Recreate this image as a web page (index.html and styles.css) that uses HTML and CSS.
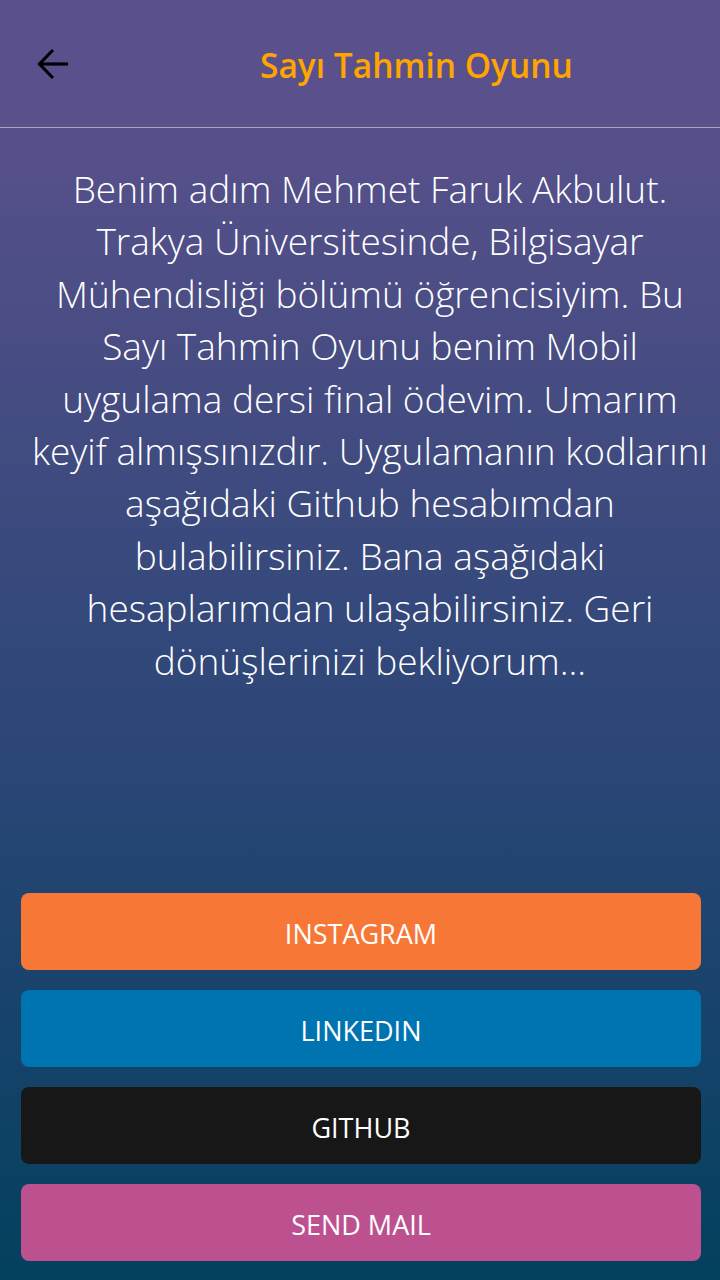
FILE: index.html
```html
<!DOCTYPE html>
<html lang="tr">
<head>
<meta charset="utf-8">
<title>Sayı Tahmin Oyunu</title>
<link rel="stylesheet" href="styles.css">
</head>
<body>
<div class="screen">
  <header class="appbar">
    <button class="back" aria-label="Geri">
      <svg width="32" height="32" viewBox="0 0 32 32" fill="none" stroke="#000" stroke-width="3.2" stroke-linecap="butt" stroke-linejoin="miter">
        <path d="M31 16H3"/>
        <path d="M16 2L2.5 16L16 30"/>
      </svg>
    </button>
    <h1 class="title">Sayı Tahmin Oyunu</h1>
  </header>
  <main class="content">
    <p class="about">Benim adım Mehmet Faruk Akbulut.<br>Trakya Üniversitesinde, Bilgisayar<br>Mühendisliği bölümü öğrencisiyim. Bu<br>Sayı Tahmin Oyunu benim Mobil<br>uygulama dersi final ödevim. Umarım<br>keyif almışsınızdır. Uygulamanın kodlarını<br>aşağıdaki Github hesabımdan<br>bulabilirsiniz. Bana aşağıdaki<br>hesaplarımdan ulaşabilirsiniz. Geri<br>dönüşlerinizi bekliyorum...</p>
  </main>
  <nav class="links">
    <a class="btn btn-instagram" href="#">INSTAGRAM</a>
    <a class="btn btn-linkedin" href="#">LINKEDIN</a>
    <a class="btn btn-github" href="#">GITHUB</a>
    <a class="btn btn-mail" href="#">SEND MAIL</a>
  </nav>
</div>
</body>
</html>
```

FILE: styles.css
```css
* { box-sizing: border-box; }
html, body { margin: 0; padding: 0; }
body {
  width: 720px;
  height: 1280px;
  font-family: "Open Sans", "Noto Sans", sans-serif;
  overflow: hidden;
}
.screen {
  width: 720px;
  height: 1280px;
  display: flex;
  flex-direction: column;
  background: linear-gradient(180deg, #5a518c 0%, #56508a 12%, #2a4676 60%, #03405e 100%);
}
.appbar {
  height: 128px;
  flex: none;
  display: flex;
  align-items: center;
  border-bottom: 1px solid #a8a8b4;
  background: #5a518c;
}
.back {
  width: 32px;
  height: 32px;
  margin-left: 37px;
  padding: 0;
  border: 0;
  background: none;
  display: flex;
}
.title {
  margin: 4px 0 0 191px;
  font-size: 33.5px;
  font-weight: 600;
  color: #ffa500;
  line-height: 1;
}
.content {
  flex: 1;
  padding: 35px 0 0 20px;
}
.about {
  margin: 0;
  color: #fff;
  font-weight: 300;
  font-size: 37px;
  line-height: 52.4px;
  text-align: center;
}
.links {
  display: flex;
  flex-direction: column;
  gap: 20px;
  padding: 0 19px 19px 21px;
}
.btn {
  display: flex;
  align-items: center;
  justify-content: center;
  height: 77px;
  padding-top: 3px;
  border-radius: 8px;
  color: #fff;
  text-decoration: none;
  font-size: 27px;
}
.btn-instagram { background: #f77737; }
.btn-linkedin { background: #0073b1; }
.btn-github { background: #181718; }
.btn-mail { background: #bd5190; }
```
